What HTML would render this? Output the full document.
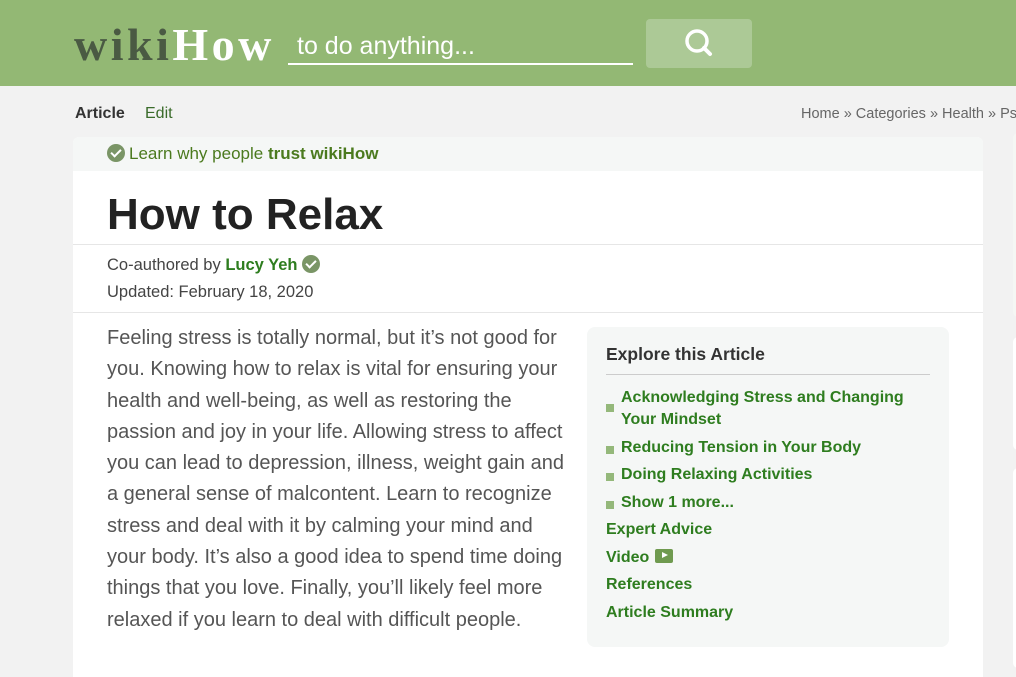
<!DOCTYPE html>
<html><head><meta charset="utf-8"><style>
*{margin:0;padding:0;box-sizing:border-box}
body{width:1016px;height:665px;overflow:hidden;background:#f2f2f2;font-family:"Liberation Sans",Arial,sans-serif;position:relative}
.hdr{position:absolute;left:0;top:0;width:1016px;height:86px;background:#93b874}
.logo{position:absolute;left:74px;top:18px;font-family:"Liberation Serif",serif;font-weight:bold;font-size:46px;letter-spacing:3.5px;color:#4a5a43}
.logo b{color:#fff}
.search{position:absolute;left:288px;top:30px;width:345px;height:35px;border-bottom:2px solid #fff;color:#fff;font-size:25px;padding-left:9px;line-height:32px}
.btn{position:absolute;left:646px;top:19px;width:106px;height:49px;background:#acc996;border-radius:4px}
.tabs{position:absolute;top:105px;font-size:16px}
.crumb{position:absolute;left:801px;top:106px;font-size:14.5px;color:#666;white-space:nowrap}
.card{position:absolute;left:73px;top:137px;width:910px;height:540px;background:#fff;border-radius:6px 6px 0 0;overflow:hidden}
.trust{height:34px;background:#f5f7f6;font-size:17px;color:#4b7a1e;padding:7px 0 0 34px}
.chk{display:inline-block;width:18px;height:18px;border-radius:50%;background:#7a9566;vertical-align:-3px;position:relative;margin-right:4px}
.chk:after{content:"";position:absolute;left:6px;top:3px;width:4px;height:8px;border:solid #fff;border-width:0 2px 2px 0;transform:rotate(45deg)}
h1{position:absolute;left:34px;top:53px;font-size:44px;color:#222;font-weight:bold}
.l1{position:absolute;left:0;top:107px;width:910px;border-top:1px solid #e6e6e6}
.l2{position:absolute;left:0;top:175px;width:910px;border-top:1px solid #e6e6e6}
.auth{position:absolute;left:34px;top:115px;font-size:16.5px;color:#444;line-height:27px}
.auth b{color:#2e7d1f}
.txt{position:absolute;left:34px;top:186px;width:462px;font-size:20px;line-height:31.3px;color:#555}
.toc{position:absolute;left:514px;top:190px;width:362px;height:320px;background:#f5f7f6;border-radius:8px;padding:17px 19px}
.toc h3{font-size:17.5px;color:#333;padding-bottom:9px;border-bottom:1px solid #ccc}
.toc ul{list-style:none;margin-top:12px}
.toc li{font-size:16px;font-weight:bold;color:#2e7d1f;line-height:22px;margin-bottom:5.5px;position:relative}
.toc li.s{padding-left:15px}
.toc li.s:before{content:"";position:absolute;left:0;top:9px;width:8px;height:8px;background:#94b87a}
.toc li.s.two:before{top:17px}
.play{display:inline-block;width:18px;height:14px;background:#6f9a4f;border-radius:2px;vertical-align:-1px;margin-left:6px;position:relative}
.play:after{content:"";position:absolute;left:7px;top:3.5px;border-left:6px solid #fff;border-top:3.5px solid transparent;border-bottom:3.5px solid transparent}
.side{position:absolute;left:1013px;background:#fff;width:10px;border-radius:6px}
</style></head><body>
<div class="hdr">
<div class="logo">wiki<b>How</b></div>
<div class="search">to do anything...</div>
<div class="btn"><svg width="106" height="49"><circle cx="51" cy="22" r="10" fill="none" stroke="#fff" stroke-width="3.5"/><line x1="58" y1="29" x2="64" y2="35" stroke="#fff" stroke-width="4" stroke-linecap="round"/></svg></div>
</div>
<div class="tabs" style="left:75px;font-weight:bold;color:#333">Article</div>
<div class="tabs" style="left:145px;color:#3a6b2a">Edit</div>
<div class="crumb">Home » Categories » Health » Ps</div>
<div class="side" style="top:133px;height:184px;background:#f5f7f4"></div>
<div class="side" style="top:337px;height:113px"></div>
<div class="side" style="top:468px;height:200px"></div>
<div class="card">
<div class="trust"><span class="chk"></span>Learn why people <b>trust wikiHow</b></div>
<h1>How to Relax</h1>
<div class="l1"></div>
<div class="auth">Co-authored by <b>Lucy Yeh</b> <span class="chk"></span><br>Updated: February 18, 2020</div>
<div class="l2"></div>
<div class="txt">Feeling stress is totally normal, but it’s not good for you. Knowing how to relax is vital for ensuring your health and well-being, as well as restoring the passion and joy in your life. Allowing stress to affect you can lead to depression, illness, weight gain and a general sense of malcontent. Learn to recognize stress and deal with it by calming your mind and your body. It’s also a good idea to spend time doing things that you love. Finally, you’ll likely feel more relaxed if you learn to deal with difficult people.</div>
<div class="toc">
<h3>Explore this Article</h3>
<ul>
<li class="s two">Acknowledging Stress and Changing Your Mindset</li>
<li class="s">Reducing Tension in Your Body</li>
<li class="s">Doing Relaxing Activities</li>
<li class="s">Show 1 more...</li>
<li>Expert Advice</li>
<li>Video<span class="play"></span></li>
<li>References</li>
<li>Article Summary</li>
</ul>
</div>
</div>
</body></html>
